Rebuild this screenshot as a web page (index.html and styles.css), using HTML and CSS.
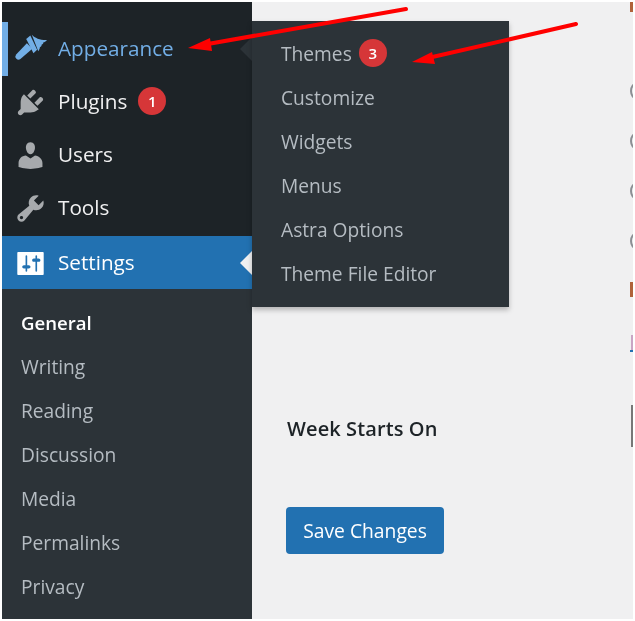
FILE: index.html
```html
<!DOCTYPE html>
<html lang="en">
<head>
<meta charset="utf-8">
<title>General Settings</title>
<link rel="stylesheet" href="styles.css">
</head>
<body>
<div class="screen">
  <nav class="sidebar">
    <ul class="top-menu">
      <li class="top-item is-open">
        <svg class="icon" viewBox="0 0 20 20"><path d="M10.800 1C12.800 3 16 4.500 20 4.300c-.8.9-1.500 1.300-2.300 1.500.2.500-.2 1.100-1 1.300.2.600-.4 1.300-1 1.500 0 .7-.5 1.600-1 2.500z"/><path d="M7.400 3.700L9.900 1.500l4.100 8.700-2.200 2.100z"/><path d="M7.800 6.200l3.300 3.300-7.200 6.200a1.850 1.850 0 0 1-2.600-2.600z"/></svg>
        <span>Appearance</span>
      </li>
      <li class="top-item">
        <svg class="icon" viewBox="0 0 20 20"><path d="M13.11 4.36L9.87 7.6 8 5.73l3.24-3.24c.35-.34 1.05-.2 1.56.32.52.51.66 1.21.31 1.55zm-8 1.77l.91-1.12 9.01 9.01-1.19.84c-.71.71-2.63 1.16-3.82 1.16H6.14L4.9 17.26c-.59.59-1.54.59-2.12 0-.59-.58-.59-1.53 0-2.12l1.24-1.24v-3.88c0-1.13.4-3.19 1.09-3.89zm7.26 3.97l3.24-3.24c.34-.35 1.04-.21 1.55.31.52.51.66 1.21.31 1.55l-3.24 3.25z"/></svg>
        <span>Plugins</span><span class="badge">1</span>
      </li>
      <li class="top-item">
        <svg class="icon" viewBox="0 0 20 20"><path d="M10 9.25c-2.27 0-2.73-3.44-2.73-3.44C7 4.02 7.82 2 9.97 2c2.16 0 2.98 2.02 2.71 3.81 0 0-.41 3.44-2.68 3.44zm0 2.57L12.72 10c2.39 0 4.52 2.33 4.52 4.53v2.49s-3.65 1.13-7.24 1.13c-3.65 0-7.24-1.13-7.24-1.13v-2.49c0-2.25 1.94-4.48 4.47-4.48z"/></svg>
        <span>Users</span>
      </li>
      <li class="top-item">
        <svg class="icon" viewBox="0 0 20 20"><path d="M16.68 9.77c-1.34 1.34-3.3 1.67-4.95.99l-5.41 6.52c-.99.99-2.59.99-3.58 0s-.99-2.59 0-3.57l6.52-5.42c-.68-1.65-.35-3.61.99-4.95 1.28-1.28 3.12-1.62 4.72-1.06l-2.89 2.89 2.82 2.82 2.86-2.87c.53 1.58.18 3.39-1.08 4.65zM3.81 16.21c.4.39 1.04.39 1.43 0 .4-.4.4-1.04 0-1.43-.39-.4-1.03-.4-1.43 0-.39.39-.39 1.03 0 1.43z"/></svg>
        <span>Tools</span>
      </li>
      <li class="top-item is-current">
        <svg class="icon" viewBox="0 0 20 20"><path d="M18 16.500V3.500c0-.3-.2-.5-.5-.5h-15c-.3 0-.5.2-.5.5v13c0 .3.2.5.5.5h15c.3 0 .5-.2.500-.5zM8 11h1c.55 0 1 .45 1 1s-.45 1-1 1H8v1.500c0 .28-.22.5-.5.5s-.5-.22-.5-.5V13H6c-.55 0-1-.45-1-1s.45-1 1-1h1V5.500c0-.28.22-.5.5-.5s.5.22.5.5V11zm5-2h-1c-.55 0-1-.45-1-1s.45-1 1-1h1V5.500c0-.28.22-.5.5-.5s.5.22.5.5V7h1c.55 0 1 .45 1 1s-.45 1-1 1h-1v5.500c0 .28-.22.5-.5.5s-.5-.22-.5-.5V9z"/></svg>
        <span>Settings</span>
      </li>
    </ul>
    <ul class="sub-menu">
      <li class="sub-item is-active">General</li>
      <li class="sub-item">Writing</li>
      <li class="sub-item">Reading</li>
      <li class="sub-item">Discussion</li>
      <li class="sub-item">Media</li>
      <li class="sub-item">Permalinks</li>
      <li class="sub-item">Privacy</li>
    </ul>
  </nav>
  <main class="main">
    <form class="form">
      <div class="field-label">Week Starts On</div>
      <button class="save" type="button">Save Changes</button>
    </form>
    <div class="edge">
      <i class="edge-bar edge-bar-top"></i>
      <i class="edge-radio edge-radio-first"></i>
      <i class="edge-radio"></i>
      <i class="edge-radio"></i>
      <i class="edge-radio"></i>
      <i class="edge-bar edge-bar-mid"></i>
      <i class="edge-link"></i>
      <i class="edge-select"></i>
    </div>
  </main>
  <ul class="flyout">
    <li class="fly-item"><span>Themes</span><span class="badge">3</span></li>
    <li class="fly-item">Customize</li>
    <li class="fly-item">Widgets</li>
    <li class="fly-item">Menus</li>
    <li class="fly-item">Astra Options</li>
    <li class="fly-item">Theme File Editor</li>
  </ul>
  <svg class="arrows" viewBox="0 0 635 621" width="635" height="621">
    <path class="arrow-line" d="M406 9L205 44.500"/>
    <path class="arrow-head" d="M188 48L210 38L212 51Z"/>
    <path class="arrow-line" d="M576 24L428 58"/>
    <path class="arrow-head" d="M412 62L432 52L435 64Z"/>
  </svg>
</div>
</body>
</html>
```

FILE: styles.css
```css
* { box-sizing: border-box; }
html, body { margin: 0; padding: 0; background: #fff; }
body { width: 635px; height: 621px; overflow: hidden; font-family: "Open Sans", "Noto Sans", sans-serif; }
ul { list-style: none; margin: 0; padding: 0; }

.screen { position: relative; display: flex; width: 631px; height: 617px; margin: 2px 0 0 2px; filter: blur(0.5px); }

.sidebar { width: 250px; flex: none; background: #2c3338; }
.top-menu { background: #1d2327; padding-top: 20px; }
.top-item { position: relative; display: flex; align-items: center; height: 53px; padding: 0 0 3px 12px; color: #f0f0f1; font-size: 20.7px; }
.top-item .icon { width: 33px; height: 33px; margin: 2px 11px 0 0; flex: none; fill: #a7aaad; }
.top-item.is-open { height: 54px; padding: 0 0 2px 6px; color: #72aee6; border-left: 6px solid #72aee6; }
.top-item.is-open .icon { fill: #72aee6; }
.top-item.is-open::after { content: ""; position: absolute; right: 0; top: 15px; border: 12px solid transparent; border-right-color: #2c3338; border-left-width: 0; }
.top-item.is-current { height: 53px; margin-top: 1px; padding-bottom: 1px; background: #2271b1; color: #fff; }
.top-item.is-current .icon { fill: #fff; }
.top-item.is-current::after { content: ""; position: absolute; right: 0; top: 15px; border: 12px solid transparent; border-right-color: #f0f0f1; border-left-width: 0; }

.badge { display: inline-flex; align-items: center; justify-content: center; width: 28px; height: 28px; margin-left: 11px; border-radius: 50%; background: #d63638; color: #fff; font-size: 15px; font-weight: 600; }
.fly-item .badge { margin-left: 7px; }

.sub-menu { padding-top: 12px; }
.sub-item { display: flex; align-items: center; height: 44px; padding: 0 0 2px 19px; color: #b5bcc2; font-size: 19.2px; }
.sub-item.is-active { color: #fff; font-size: 18.6px; font-weight: 600; }

.main { flex: 1; display: flex; background: #f0f0f1; }
.form { flex: 1; padding: 415px 0 0 34px; }
.field-label { height: 24px; line-height: 24px; color: #1d2327; font-size: 20px; font-weight: 600; letter-spacing: 0.1px; padding-left: 1px; }
.save { display: block; width: 158px; height: 47px; margin-top: 66px; padding: 0; border: 0; border-radius: 4px; background: #2271b1; color: #fff; font: 19.3px "Open Sans", "Noto Sans", sans-serif; }

.edge { width: 3px; flex: none; display: flex; flex-direction: column; overflow: hidden; }
.edge-bar { display: block; width: 3px; flex: none; background: #b0623a; }
.edge-bar-top { height: 10px; }
.edge-radio { display: block; width: 12px; height: 16px; flex: none; margin-top: 34px; border: 2px solid #8c8f94; border-radius: 50%; }
.edge-radio-first { margin-top: 71px; }
.edge-bar-mid { height: 15px; margin-top: 33px; }
.edge-link { display: block; width: 3px; height: 17px; flex: none; margin-top: 38px; background: linear-gradient(90deg, #f0f0f1 30%, #c9a5c4 30%); border-bottom: 2px solid #2271b1; }
.edge-select { display: block; width: 2px; height: 42px; flex: none; margin: 53px 0 0 1px; background: #777; }

.flyout { position: absolute; left: 250px; top: 19px; width: 257px; height: 286px; padding-top: 11px; background: #2c3338; box-shadow: 0 3px 5px rgba(0, 0, 0, 0.25); }
.fly-item { display: flex; align-items: center; height: 44px; padding: 0 0 2px 29px; color: #b5bcc2; font-size: 19.2px; }

.arrows { position: absolute; left: -2px; top: -2px; pointer-events: none; }
.arrow-line { fill: none; stroke: #f00; stroke-width: 4; stroke-linecap: round; }
.arrow-head { fill: #f00; }
```
